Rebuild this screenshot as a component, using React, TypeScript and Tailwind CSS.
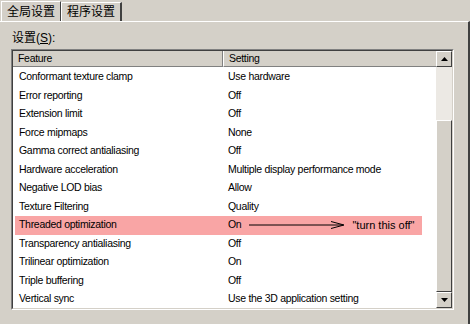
import React from 'react';

const rows: [string, string][] = [
  ['Conformant texture clamp', 'Use hardware'],
  ['Error reporting', 'Off'],
  ['Extension limit', 'Off'],
  ['Force mipmaps', 'None'],
  ['Gamma correct antialiasing', 'Off'],
  ['Hardware acceleration', 'Multiple display performance mode'],
  ['Negative LOD bias', 'Allow'],
  ['Texture Filtering', 'Quality'],
  ['Threaded optimization', 'On'],
  ['Transparency antialiasing', 'Off'],
  ['Trilinear optimization', 'On'],
  ['Triple buffering', 'Off'],
  ['Vertical sync', 'Use the 3D application setting'],
];

const ScrollBtn: React.FC<{ up?: boolean }> = ({ up }) => (
  <div className="h-[16px] w-[16px] bg-[#d4d0c8] border border-t-white border-l-white border-r-[#404040] border-b-[#404040] flex items-center justify-center">
    <svg width="7" height="4" viewBox="0 0 7 4">
      {up ? <path d="M0 4 L3.5 0 L7 4 Z" fill="#000" /> : <path d="M0 0 L3.5 4 L7 0 Z" fill="#000" />}
    </svg>
  </div>
);

const App: React.FC = () => {
  return (
    <div className="w-[470px] h-[324px] bg-[#d4d0c8] text-[10.5px] tracking-[-0.3px] text-black overflow-hidden" style={{ fontFamily: '"Liberation Sans", "Noto Sans CJK SC", sans-serif' }}>
      {/* tabs */}
      <div className="flex h-[21px] items-end pl-[1px] tracking-normal">
        <div className="h-[20px] px-[5px] flex items-center border-t border-l border-white border-r border-r-[#404040] bg-[#d4d0c8] z-10 text-[12px]">全局设置</div>
        <div className="h-[19px] px-[5px] flex items-center border-t border-l border-white border-r-2 border-r-[#404040] text-[12px]">程序设置</div>
      </div>
      {/* panel */}
      <div className="h-[303px] border-t border-white border-r-2 border-r-[#404040] pl-[11px] pr-[14px] pt-[7px]">
        <div className="h-[20px] pl-[1px] text-[12px] tracking-normal">设置(<span className="underline">S</span>):</div>
        <div className="h-[261px] border border-t-[#808080] border-l-[#808080] border-r-white border-b-white">
          <div className="h-full border border-t-[#404040] border-l-[#404040] border-r-[#d4d0c8] border-b-[#d4d0c8] bg-white flex">
            <div className="flex-1 flex flex-col">
              <div className="h-[16px] flex bg-[#d4d0c8]">
                <div className="w-[210px] pl-[5px] flex items-center border-r border-r-[#808080] border-b border-b-[#808080]">Feature</div>
                <div className="flex-1 pl-[5px] flex items-center border-b border-b-[#808080] border-l border-l-white">Setting</div>
              </div>
              <div className="pt-[1px] pr-[14px]">
                {rows.map(([f, s], i) => {
                  const hl = i === 8;
                  return (
                    <div key={f} className={`h-[18.5px] flex items-center ml-[2px] ${hl ? 'bg-[#f9a5a5]' : ''}`}>
                      <div className="w-[208px] pl-[4px] whitespace-nowrap">{f}</div>
                      <div className="flex-1 pl-[5px] whitespace-nowrap flex items-center">
                        {s}
                        {hl && (
                          <>
                            <svg width="98" height="10" viewBox="0 0 98 10" className="ml-[8px]">
                              <path d="M0 5 H94 M82 1.5 L95 5 L82 8.5" stroke="#000" strokeWidth="1" fill="none" />
                            </svg>
                            <span className="ml-[5px] text-[11px] tracking-normal">"turn this off"</span>
                          </>
                        )}
                      </div>
                    </div>
                  );
                })}
              </div>
            </div>
            {/* scrollbar */}
            <div className="w-[16px] flex flex-col">
              <ScrollBtn up />
              <div className="h-[53px] bg-[#ece9e4]" />
              <div className="flex-1 bg-[#d4d0c8] border border-t-white border-l-white border-r-[#404040] border-b-[#404040]" />
              <ScrollBtn />
            </div>
          </div>
        </div>
      </div>
    </div>
  );
};

export default App;
